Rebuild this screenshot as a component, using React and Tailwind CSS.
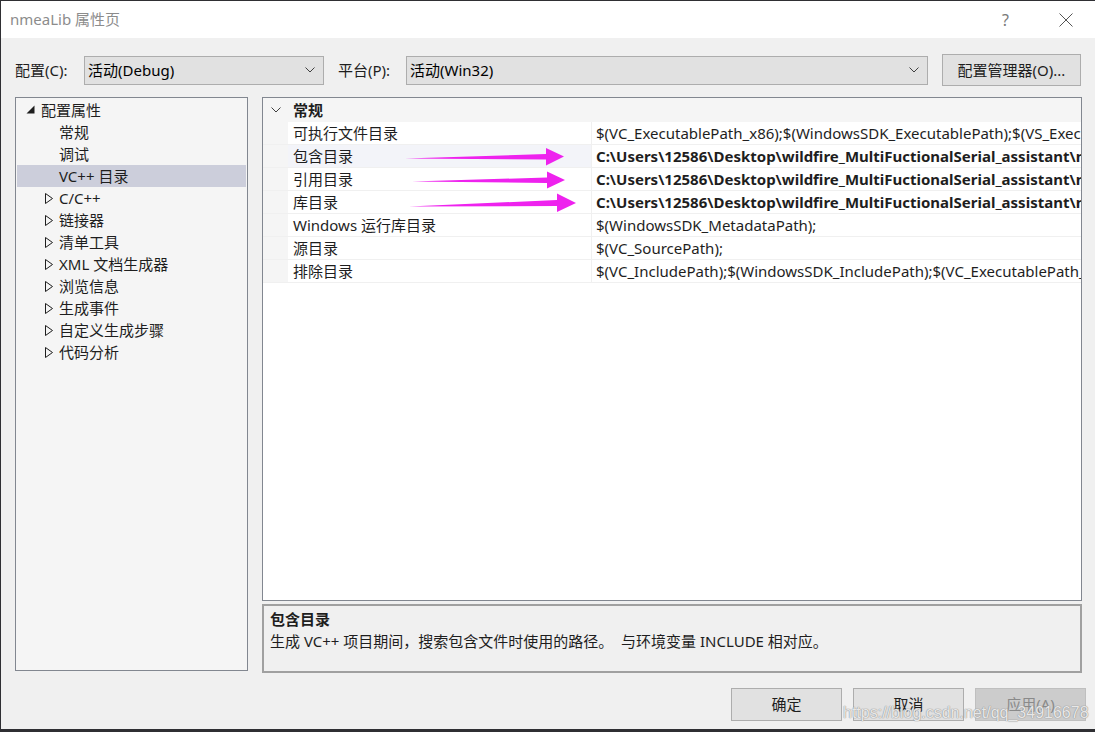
import React from "react";

const font = { fontFamily: '"Noto Sans", "Noto Sans CJK SC", sans-serif' };

function Chevron({ className = "" }) {
  return (
    <svg width="10" height="6" viewBox="0 0 10 6" className={className}>
      <path d="M0.5 0.5 L5 5 L9.5 0.5" fill="none" stroke="#404040" strokeWidth="1" />
    </svg>
  );
}

function Dropdown({ label, w }) {
  return (
    <div className={`h-[29px] ${w} bg-[#e1e1e1] border border-[#adadad] flex items-center justify-between pl-[3px] pr-[8px]`}>
      <span className="text-[15px] text-black leading-none">{label}</span>
      <Chevron />
    </div>
  );
}

const treeChildren = ["C/C++", "链接器", "清单工具", "XML 文档生成器", "浏览信息", "生成事件", "自定义生成步骤", "代码分析"];

function OpenTri() {
  return (
    <svg width="9" height="9" viewBox="0 0 9 9">
      <path d="M8.5 0.5 L8.5 8.5 L0.5 8.5 Z" fill="#1e1e1e" />
    </svg>
  );
}
function ClosedTri() {
  return (
    <svg width="8" height="11" viewBox="0 0 8 11">
      <path d="M0.5 0.5 L7.5 5.5 L0.5 10.5 Z" fill="none" stroke="#1e1e1e" strokeWidth="1" />
    </svg>
  );
}

const rows = [
  { n: "可执行文件目录", v: "$(VC_ExecutablePath_x86);$(WindowsSDK_ExecutablePath);$(VS_ExecutablePath);$(MSBuild_ExecutablePath)" },
  { n: "包含目录", v: "C:\\Users\\12586\\Desktop\\wildfire_MultiFuctionalSerial_assistant\\nmea", b: true, sel: true },
  { n: "引用目录", v: "C:\\Users\\12586\\Desktop\\wildfire_MultiFuctionalSerial_assistant\\nmea", b: true },
  { n: "库目录", v: "C:\\Users\\12586\\Desktop\\wildfire_MultiFuctionalSerial_assistant\\nmea", b: true },
  { n: "Windows 运行库目录", v: "$(WindowsSDK_MetadataPath);" },
  { n: "源目录", v: "$(VC_SourcePath);" },
  { n: "排除目录", v: "$(VC_IncludePath);$(WindowsSDK_IncludePath);$(VC_ExecutablePath_x86);$(WindowsSDK_LibraryPath)" },
];

export default function App() {
  return (
    <div style={font} className="relative w-[1095px] h-[732px] overflow-hidden bg-[#f0f0f0] border-l border-t border-b-[3px] border-[#2f2f33] text-[15px] text-[#1e1e1e]">
      {/* title bar */}
      <div className="h-[37px] bg-white flex items-center justify-between pl-[9px] pr-[22px]">
        <span className="text-[#8c8c8c] text-[15px]">nmeaLib 属性页</span>
        <div className="flex items-center gap-[50px] text-[#7a7a7a]">
          <span className="text-[16px]">?</span>
          <svg width="14" height="14" viewBox="0 0 14 14">
            <path d="M0.5 0.5 L13.5 13.5 M13.5 0.5 L0.5 13.5" stroke="#555" strokeWidth="1" />
          </svg>
        </div>
      </div>

      {/* config row */}
      <div className="flex items-center h-[32px] mt-[16px] pl-[14px]">
        <span className="w-[69px]">配置(C):</span>
        <Dropdown label="活动(Debug)" w="w-[240px]" />
        <span className="ml-[14px] w-[68px]">平台(P):</span>
        <Dropdown label="活动(Win32)" w="w-[522px]" />
        <div className="ml-[14px] w-[139px] h-[32px] bg-[#e1e1e1] border border-[#adadad] flex items-center justify-center">
          配置管理器(O)...
        </div>
      </div>

      {/* main */}
      <div className="flex mt-[11px] pl-[14px] gap-[14px]">
        {/* tree */}
        <div className="w-[233px] h-[574px] bg-[#f5f5f5] border border-[#828790] p-[1px]">
          <div className="h-[22px] flex items-center">
            <span className="w-[24px] flex justify-end pr-[6px] pb-[2px]"><OpenTri /></span>
            <span className="leading-none">配置属性</span>
          </div>
          {["常规", "调试", "VC++ 目录"].map((t, i) => (
            <div key={t} className={`h-[22px] flex items-center pl-[42px] ${i === 2 ? "bg-[#cccedb]" : ""}`}>
              <span className="leading-none">{t}</span>
            </div>
          ))}
          {treeChildren.map((t) => (
            <div key={t} className="h-[22px] flex items-center">
              <span className="w-[42px] pl-[28px] flex items-center"><ClosedTri /></span>
              <span className="leading-none">{t}</span>
            </div>
          ))}
        </div>

        {/* right column */}
        <div className="flex flex-col gap-[3px]">
          <div className="w-[820px] h-[504px] bg-white border border-[#828790] overflow-hidden">
            <div className="h-[24px] bg-[#f5f5f5] flex items-center">
              <span className="w-[25px] flex justify-center"><Chevron /></span>
              <span className="font-bold leading-none pl-[5px]">常规</span>
            </div>
            {rows.map((r) => (
              <div key={r.n} className="h-[23px] flex border-b border-[#f0f0f0] bg-[#f5f5f5]">
                <div className={`w-[304px] shrink-0 flex items-center pl-[5px] border-r border-[#f0f0f0] ${r.sel ? "bg-[#f3f4f9]" : "bg-white"} ml-[25px]`}>
                  <span className="leading-none whitespace-nowrap">{r.n}</span>
                </div>
                <div className="flex-1 flex items-center pl-[4px] bg-white overflow-hidden">
                  <span className={`leading-none whitespace-nowrap ${r.b ? "font-bold" : ""}`}>{r.v}</span>
                </div>
              </div>
            ))}
          </div>
          <div className="w-[820px] h-[69px] border-2 border-[#a0a0a0] bg-[#f0f0f0] pl-[6px] pt-[2px]">
            <div className="font-bold h-[22px] flex items-center leading-none">包含目录</div>
            <div className="h-[23px] flex items-center leading-none">生成 VC++ 项目期间，搜索包含文件时使用的路径。&nbsp;&nbsp;与环境变量 INCLUDE 相对应。</div>
          </div>
        </div>
      </div>

      {/* buttons */}
      <div className="flex gap-[11px] mt-[15px] pl-[730px]">
        <div className="w-[111px] h-[33px] bg-[#e1e1e1] border border-[#adadad] flex items-center justify-center">确定</div>
        <div className="w-[111px] h-[33px] bg-[#e1e1e1] border border-[#adadad] flex items-center justify-center">取消</div>
        <div className="w-[111px] h-[33px] bg-[#cccccc] border border-[#bfbfbf] flex items-center justify-center text-[#8a8a8a]">应用(A)</div>
      </div>

      {/* annotation arrows */}
      <svg className="absolute left-0 top-0 pointer-events-none" width="1095" height="732" viewBox="0 0 1095 732">
        <g fill="#ee22ee">
          <path d="M404 157.5 L545 153 L545 147 L563 155.5 L545 164.5 L545 158.5 Z" />
          <path d="M411 180.5 L546 176.5 L546 170.5 L564 179 L546 187.5 L546 182 Z" />
          <path d="M408 205.5 L556 199 L556 192.5 L575 202 L556 211 L556 205 Z" />
        </g>
      </svg>

      {/* watermark */}
      <div
        className="absolute left-[842px] top-[700px] text-[16px] text-white/80 whitespace-nowrap pointer-events-none"
        style={{ fontFamily: '"Liberation Sans", Arial, sans-serif', textShadow: "0 0 1px #888, 0 0 1px #888" }}
      >
        https://blog.csdn.net/qq_34916678
      </div>
    </div>
  );
}
